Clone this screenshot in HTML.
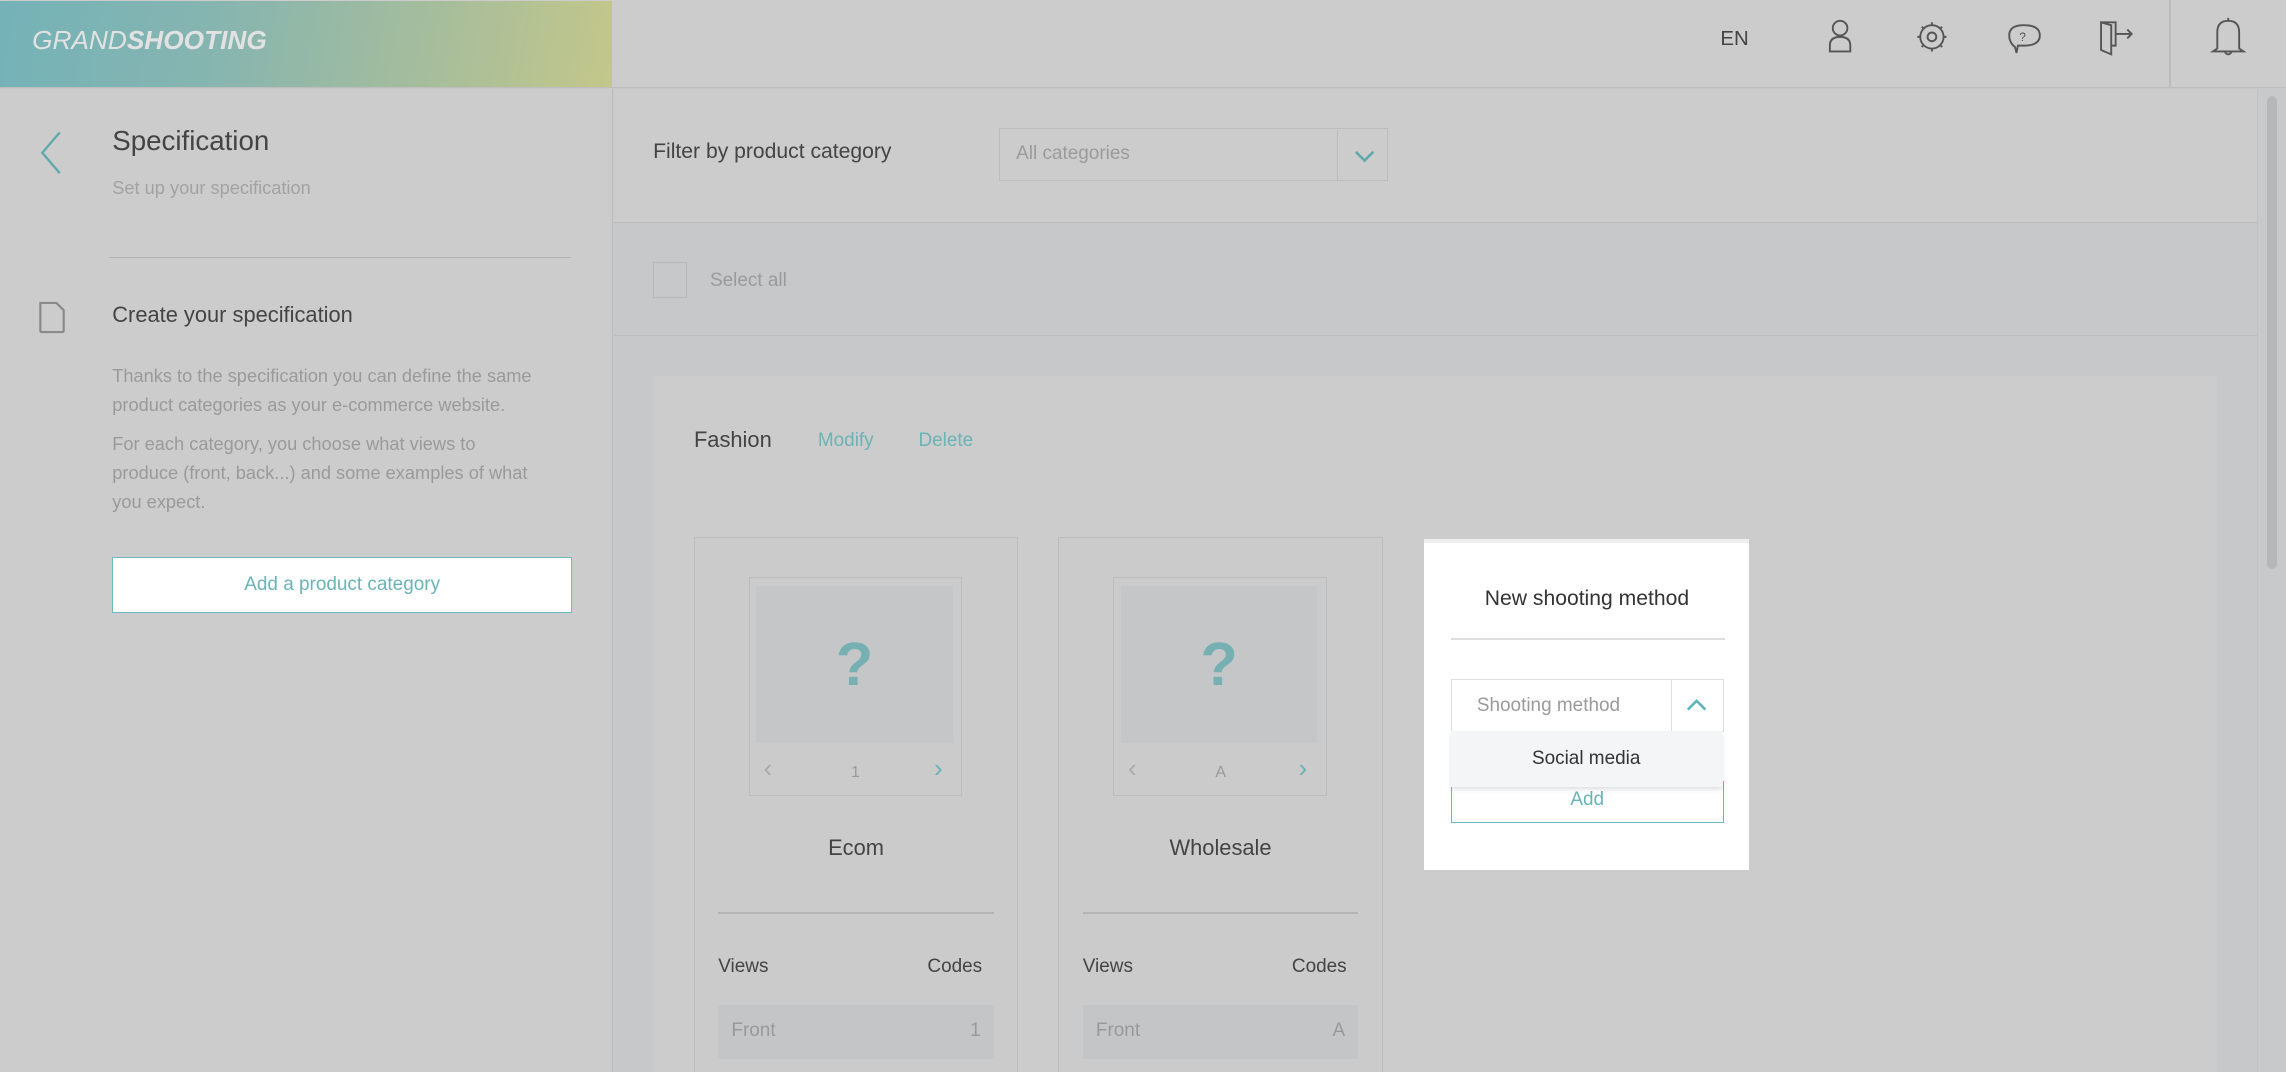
<!DOCTYPE html>
<html><head><meta charset="utf-8"><style>
html,body{margin:0;padding:0;width:2286px;height:1072px;overflow:hidden;background:#c7c8c9}
#w{zoom:1.45791;width:1568px;height:735px;position:relative;font-family:"Liberation Sans",sans-serif;color:#444}
.a{position:absolute}
.t{position:absolute;white-space:nowrap}
.teal{color:#6ab3b6}
</style></head><body><div id="w">
<!-- header -->
<div class="a" style="left:0;top:0;width:1568px;height:60px;background:#cccccc;border-bottom:1px solid #bdbdbd"></div>
<div class="a" style="left:0;top:1px;width:420px;height:59px;background:linear-gradient(100deg,#74b2b8 0%,#86b5b0 35%,#a6bd9c 70%,#c3c78a 100%)"></div>
<div class="t" style="left:22px;top:17px;font-size:18px;color:#e2e2e2;font-style:italic;letter-spacing:0px"><span style="font-weight:300">GRAND</span><b>SHOOTING</b></div>
<div class="t" style="left:1180px;top:19px;font-size:14px;color:#444">EN</div>
<svg class="a" style="left:1240px;top:10px" width="250" height="30" fill="none" stroke="#555" stroke-width="1.3">
<circle cx="22" cy="9" r="5"/><path d="M15 25 V21 Q15 15 22 15 Q29 15 29 21 V25 Z"/>
<circle cx="85" cy="15" r="8"/><circle cx="85" cy="15" r="3"/><path d="M85 5v2M85 23v2M75 15h2M93 15h2M78 8l1.5 1.5M92 8l-1.5 1.5M78 22l1.5-1.5M92 22l-1.5-1.5"/>
<path d="M142 22 Q138 19 138 14 Q138 7 148 7 Q159 7 159 14 Q159 21 148 21 L144 21 L143 26 Z"/><text x="145" y="18" font-size="8" fill="#555" stroke="none" font-family="Liberation Sans">?</text>
<path d="M201 5 L208 7 V27 L201 24 Z M201 5 H211 V21 H208 M211 13 H222 M219 10 L222 13 L219 16"/>
</svg>
<div class="a" style="left:1488px;top:0;width:1px;height:60px;background:#bbb"></div>
<svg class="a" style="left:1516px;top:10px" width="26" height="30" fill="none" stroke="#555" stroke-width="1.3"><path d="M5 23 V12 Q5 4 12.5 4 Q20 4 20 12 V23 L23 25 H2 Z M10 25 Q12.5 29 15 25 M12.5 2V4"/></svg>
<!-- left panel -->
<div class="a" style="left:0;top:61px;width:420px;height:674px;background:#cccccc;border-right:1px solid #bdbdbd"></div>
<svg class="a" style="left:24px;top:88px" width="22" height="34" fill="none" stroke="#5fa9ad" stroke-width="1.6"><path d="M17 3 L5 17 L17 31"/></svg>
<div class="t" style="left:77px;top:86px;font-size:19px;color:#444">Specification</div>
<div class="t" style="left:77px;top:122px;font-size:12.5px;color:#a2a2a2">Set up your specification</div>
<div class="a" style="left:75px;top:176px;width:317px;height:1px;background:#b0b0b0"></div>
<svg class="a" style="left:25px;top:206px" width="22" height="24" fill="none" stroke="#8a8a8a" stroke-width="1.5"><path d="M3 2 H14 L19 7 V21 Q19 22 18 22 H4 Q3 22 3 21 Z"/></svg>
<div class="t" style="left:77px;top:207px;font-size:15px;color:#444">Create your specification</div>
<div class="a" style="left:77px;top:248px;width:330px;font-size:12.5px;line-height:20px;color:#9a9a9a;white-space:nowrap">Thanks to the specification you can define the same<br>product categories as your e-commerce website.<div style="height:7px"></div>For each category, you choose what views to<br>produce (front, back...) and some examples of what<br>you expect.</div>
<div class="a" style="left:77px;top:382px;width:314px;height:37px;background:#fff;border:1px solid #6ab9bc;text-align:center;line-height:37px;font-size:13px;color:#6ab3b6">Add a product category</div>
<!-- filter bar -->
<div class="a" style="left:421px;top:61px;width:1127px;height:91px;background:#cccccc;border-bottom:1px solid #bbb"></div>
<div class="t" style="left:448px;top:96px;font-size:14.5px;color:#444">Filter by product category</div>
<div class="a" style="left:685px;top:88px;width:266px;height:35px;border:1px solid #bcbcbc;background:#cccccc"></div>
<div class="t" style="left:697px;top:98px;font-size:13px;color:#9a9a9a">All categories</div>
<div class="a" style="left:917px;top:89px;width:1px;height:35px;background:#bcbcbc"></div>
<svg class="a" style="left:926px;top:100px" width="20" height="14" fill="none" stroke="#5fa9ad" stroke-width="1.8"><path d="M4 4 L10 10 L16 4"/></svg>
<!-- select all -->
<div class="a" style="left:421px;top:153px;width:1127px;height:77px;border-bottom:1px solid #bcbcbc"></div>
<div class="a" style="left:448px;top:180px;width:22px;height:23px;border:1px solid #b8b8b8"></div>
<div class="t" style="left:487px;top:185px;font-size:13px;color:#9a9a9a">Select all</div>
<!-- category panel -->
<div class="a" style="left:448px;top:258px;width:1073px;height:477px;background:#cccccc"></div>
<div class="t" style="left:476px;top:293px;font-size:15px;color:#444">Fashion</div>
<div class="t teal" style="left:561px;top:295px;font-size:13px">Modify</div>
<div class="t teal" style="left:630px;top:295px;font-size:13px">Delete</div>
<!-- cards -->
<div class="a" style="left:476px;top:368px;width:221px;height:370px;border:1px solid #bcbcbc;background:#cbcbcb">
 <div class="a" style="left:37px;top:27px;width:145px;height:149px;border:1px solid #bcbcbc"></div>
 <div class="a" style="left:42px;top:33px;width:135px;height:108px;background:#c5c6c7;text-align:center;font-size:42px;font-weight:bold;line-height:108px;color:#76b0b3">?</div>
 <div class="t" style="left:47px;top:148px;font-size:18px;color:#aaa">‹</div>
 <div class="t" style="left:107px;top:155px;font-size:11px;color:#999">1</div>
 <div class="t teal" style="left:164px;top:148px;font-size:18px">›</div>
 <div class="t" style="left:0;width:221px;text-align:center;top:204px;font-size:15px;color:#444">Ecom</div>
 <div class="a" style="left:16px;top:257px;width:189px;height:1px;background:#b5b5b5"></div>
 <div class="t" style="left:16px;top:287px;font-size:13px;color:#444">Views</div>
 <div class="t" style="right:24px;top:287px;font-size:13px;color:#444">Codes</div>
 <div class="a" style="left:16px;top:321px;width:189px;height:37px;background:#c4c5c6"></div>
 <div class="t" style="left:25px;top:331px;font-size:13px;color:#999">Front</div>
 <div class="t" style="right:25px;top:331px;font-size:13px;color:#999">1</div>
</div>
<div class="a" style="left:726px;top:368px;width:221px;height:370px;border:1px solid #bcbcbc;background:#cbcbcb">
 <div class="a" style="left:37px;top:27px;width:145px;height:149px;border:1px solid #bcbcbc"></div>
 <div class="a" style="left:42px;top:33px;width:135px;height:108px;background:#c5c6c7;text-align:center;font-size:42px;font-weight:bold;line-height:108px;color:#76b0b3">?</div>
 <div class="t" style="left:47px;top:148px;font-size:18px;color:#aaa">‹</div>
 <div class="t" style="left:107px;top:155px;font-size:11px;color:#999">A</div>
 <div class="t teal" style="left:164px;top:148px;font-size:18px">›</div>
 <div class="t" style="left:0;width:221px;text-align:center;top:204px;font-size:15px;color:#444">Wholesale</div>
 <div class="a" style="left:16px;top:257px;width:189px;height:1px;background:#b5b5b5"></div>
 <div class="t" style="left:16px;top:287px;font-size:13px;color:#444">Views</div>
 <div class="t" style="right:24px;top:287px;font-size:13px;color:#444">Codes</div>
 <div class="a" style="left:16px;top:321px;width:189px;height:37px;background:#c4c5c6"></div>
 <div class="t" style="left:25px;top:331px;font-size:13px;color:#999">Front</div>
 <div class="t" style="right:25px;top:331px;font-size:13px;color:#999">A</div>
</div>
<!-- modal -->
<div class="a" style="left:977px;top:370px;width:223px;height:224px;background:#fff;border-top:3px solid #eee">
 <div class="t" style="left:0;width:223px;text-align:center;top:30px;font-size:14.5px;color:#333">New shooting method</div>
 <div class="a" style="left:18px;top:65px;width:188px;height:1px;background:#ddd"></div>
 <div class="a" style="left:18px;top:163px;width:186px;height:28px;border:1px solid #6ab9bc;border-top:none;text-align:center;line-height:26px;font-size:13px;color:#6ab3b6">Add</div>
 <div class="a" style="left:18px;top:93px;width:186px;height:35px;border:1px solid #ddd"></div>
 <div class="t" style="left:36px;top:104px;font-size:13px;color:#9a9a9a">Shooting method</div>
 <div class="a" style="left:169px;top:94px;width:1px;height:35px;background:#ddd"></div>
 <svg class="a" style="left:177px;top:104px" width="20" height="14" fill="none" stroke="#5fb5b9" stroke-width="1.8"><path d="M4 10 L10 4 L16 10"/></svg>
 <div class="a" style="left:18px;top:129px;width:186px;height:38px;background:#f4f5f7;box-shadow:0 2px 3px rgba(0,0,0,.12);text-align:center;line-height:38px;font-size:13px;color:#333">Social media</div>
</div>
<!-- scrollbar -->
<div class="a" style="left:1548px;top:61px;width:20px;height:674px;background:#c8c9ca;border-left:1px solid #c2c2c2"></div>
<div class="a" style="left:1555px;top:66px;width:7px;height:324px;border-radius:4px;background:#b6b7b8"></div>
</div></body></html>
